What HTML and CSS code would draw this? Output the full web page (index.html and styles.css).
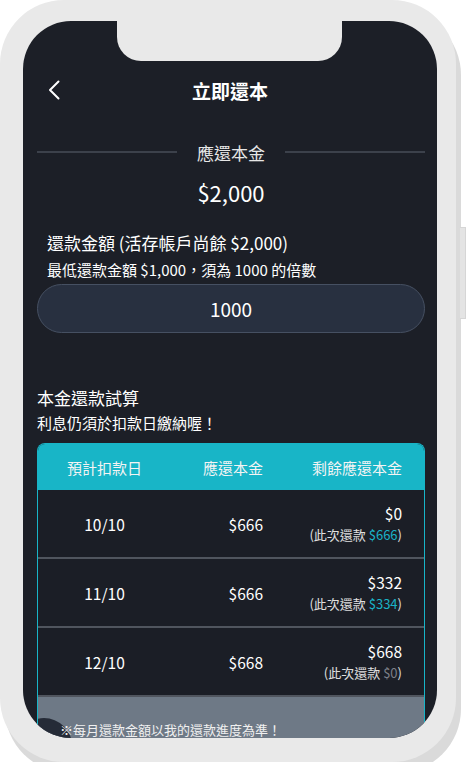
FILE: index.html
```html
<!DOCTYPE html>
<html lang="zh-Hant">
<head>
    <meta charset="UTF-8">
    <meta name="viewport" content="width=device-width, initial-scale=1.0">
    <title>立即還本</title>
    <link rel="stylesheet" href="styles.css">
</head>
<body>
    <div class="phone">
        <div class="screen">
            <div class="topbar">
                <span class="back">
                    <svg width="12" height="20" viewBox="0 0 12 20"><path d="M10.5 1.5 L2 10 L10.5 18.5" fill="none" stroke="#fff" stroke-width="2" stroke-linecap="round" stroke-linejoin="round"/></svg>
                </span>
                <h1>立即還本</h1>
                <span></span>
            </div>

            <div class="content">
                <div class="divider">
                    <span class="line"></span>
                    <span class="divider-text">應還本金</span>
                    <span class="line"></span>
                </div>
                <div class="principal">$2,000</div>

                <div class="pay-label">還款金額 (活存帳戶尚餘 $2,000)</div>
                <div class="pay-hint">最低還款金額 $1,000，須為 1000 的倍數</div>
                <div class="amount-input">1000</div>

                <div class="section-title">本金還款試算</div>
                <div class="section-note">利息仍須於扣款日繳納喔！</div>

                <div class="plan">
                    <div class="plan-head">
                        <span class="c1">預計扣款日</span>
                        <span class="c2">應還本金</span>
                        <span class="c3">剩餘應還本金</span>
                    </div>
                    <div class="plan-row">
                        <span class="c1">10/10</span>
                        <span class="c2">$666</span>
                        <span class="c3">$0<small>(此次還款 <em>$666</em>)</small></span>
                    </div>
                    <div class="plan-row">
                        <span class="c1">11/10</span>
                        <span class="c2">$666</span>
                        <span class="c3">$332<small>(此次還款 <em>$334</em>)</small></span>
                    </div>
                    <div class="plan-row">
                        <span class="c1">12/10</span>
                        <span class="c2">$668</span>
                        <span class="c3">$668<small>(此次還款 <em class="zero">$0</em>)</small></span>
                    </div>
                    <div class="plan-foot">
                        <span class="fab"></span>
                        <span class="foot-text">※每月還款金額以我的還款進度為準！</span>
                    </div>
                </div>
            </div>
        </div>
        <div class="notch"></div>
        <div class="side-btn"></div>
    </div>
</body>
</html>
```

FILE: styles.css
```css
body {
    margin: 0;
    background: #fff;
    font-family: "Noto Sans CJK TC", "Noto Sans", sans-serif;
}
.phone {
    position: relative;
    width: 456px;
    height: 762px;
    box-sizing: border-box;
    padding: 21px 19px 24px 23px;
    background: #e9e9e9;
    border-radius: 64px;
    box-shadow: 5px 11px 0 #dadada;
}
.notch {
    position: absolute;
    left: 117px;
    top: 0;
    width: 225px;
    height: 61px;
    background: #e9e9e9;
    border-radius: 0 0 24px 24px;
}
.side-btn {
    position: absolute;
    right: -10px;
    top: 227px;
    width: 5px;
    height: 90px;
    background: #e4e4e4;
    border: 1px solid #d6d6d6;
    border-left: none;
}
.screen {
    position: relative;
    height: 717px;
    border-radius: 48px;
    background: #1c1f27;
    color: #fff;
    overflow: hidden;
}
.topbar {
    display: grid;
    grid-template-columns: 50px 1fr 50px;
    align-items: center;
    height: 42px;
    margin-top: 48px;
}
.back {
    display: flex;
    padding-left: 25px;
}
.topbar h1 {
    margin: 0;
    text-align: center;
    font-size: 19px;
    font-weight: bold;
}
.content {
    padding: 0 12px 0 14px;
}
.divider {
    display: flex;
    align-items: center;
    margin-top: 29px;
    height: 24px;
}
.line {
    flex: 1;
    height: 2px;
    background: #3c414b;
}
.divider-text {
    margin: 0 20px;
    font-size: 17px;
    color: #e6e6e6;
}
.principal {
    margin-top: 13px;
    text-align: center;
    font-size: 22px;
    line-height: 30px;
}
.pay-label {
    margin-top: 24px;
    padding-left: 10px;
    font-size: 17px;
    line-height: 24px;
}
.pay-hint {
    margin-top: 4px;
    padding-left: 10px;
    font-size: 15px;
    line-height: 22px;
}
.amount-input {
    margin-top: 3px;
    height: 49px;
    box-sizing: border-box;
    border: 1px solid #465062;
    border-radius: 25px;
    background: #283040;
    display: flex;
    align-items: center;
    justify-content: center;
    font-size: 19px;
}
.section-title {
    margin-top: 53px;
    font-size: 17px;
    line-height: 24px;
}
.section-note {
    margin-top: 2px;
    font-size: 15px;
    line-height: 22px;
}
.plan {
    margin-top: 9px;
    border: 1px solid #18b5c7;
    border-bottom: none;
    border-radius: 8px 8px 0 0;
    overflow: hidden;
}
.plan-head, .plan-row {
    display: grid;
    grid-template-columns: 133px 92px 1fr;
    align-items: center;
}
.plan-head {
    height: 46px;
    background: #18b5c7;
    font-size: 15px;
    color: #f4f4f4;
}
.plan-row {
    height: 67px;
    background: #1b1e26;
    border-bottom: 2px solid #50555e;
    font-size: 15.5px;
}
.c1 {
    text-align: center;
}
.c2 {
    text-align: right;
}
.c3 {
    text-align: right;
    padding-right: 22px;
}
.plan-row .c3 {
    line-height: 21px;
}
.plan-row small {
    display: block;
    font-size: 13px;
    color: #e0e0e0;
}
.plan-row em {
    font-style: normal;
    color: #1ab3c6;
}
.plan-row em.zero {
    color: #7b7f87;
}
.plan-foot {
    position: relative;
    height: 60px;
    background: #6e7986;
    padding: 24px 0 0 22px;
    box-sizing: border-box;
    font-size: 13px;
    line-height: 18px;
    color: #f0f0f0;
}
.fab {
    position: absolute;
    left: -22px;
    top: 21px;
    width: 56px;
    height: 56px;
    border-radius: 50%;
    background: #252b37;
}
.foot-text {
    position: relative;
}
```
